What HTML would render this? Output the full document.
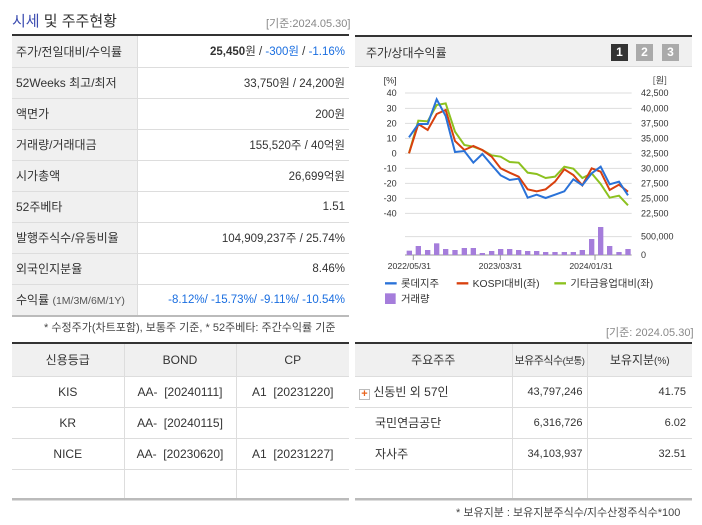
<!DOCTYPE html>
<html><head><meta charset="utf-8"><style>
*{margin:0;padding:0;box-sizing:border-box}
body{width:702px;height:525px;background:#fff;font-family:"Liberation Sans","Noto Sans CJK KR",sans-serif;color:#333;position:relative;overflow:hidden;font-size:12px}
.a{position:absolute;white-space:nowrap}
table{border-collapse:collapse;position:absolute;table-layout:fixed}
td{height:31px;border-bottom:1px solid #ddd;font-size:12px;white-space:nowrap;overflow:hidden}
.st td.l{background:#f0f0f0;padding-left:4px;border-right:1px solid #ddd;color:#333}
.st td.r{text-align:right;padding-right:4px;color:#333;font-size:11.5px}
.b td{border-right:1px solid #ddd;text-align:center;height:31px}
.b td:last-child{border-right:none}
.b tr.h td{background:#f0f0f0;height:32px}
.blue,.st td.blue{color:#1a6ee0}
</style></head><body>
<div class="a" style="left:12px;top:10px;font-size:15px;color:#333"><span style="color:#3a4bb0">시세</span> 및 주주현황</div>
<div class="a" style="left:266px;top:15px;font-size:11px;color:#888">[기준:2024.05.30]</div>
<div class="a" style="left:12px;top:34px;width:337px;height:2px;background:#333"></div>
<table class="st" style="left:12px;top:36px;width:337px">
<col style="width:125px"><col>
<tr><td class="l">주가/전일대비/수익률</td><td class="r"><b>25,450</b>원 / <span class="blue">-300원</span> / <span class="blue">-1.16%</span></td></tr>
<tr><td class="l">52Weeks 최고/최저</td><td class="r">33,750원 / 24,200원</td></tr>
<tr><td class="l">액면가</td><td class="r">200원</td></tr>
<tr><td class="l">거래량/거래대금</td><td class="r">155,520주 / 40억원</td></tr>
<tr><td class="l">시가총액</td><td class="r">26,699억원</td></tr>
<tr><td class="l">52주베타</td><td class="r">1.51</td></tr>
<tr><td class="l">발행주식수/유동비율</td><td class="r">104,909,237주 / 25.74%</td></tr>
<tr><td class="l">외국인지분율</td><td class="r">8.46%</td></tr>
<tr><td class="l" style="border-bottom:none">수익률 <span style="font-size:10.5px;color:#555">(1M/3M/6M/1Y)</span></td><td class="r blue" style="border-bottom:none">-8.12%/ -15.73%/ -9.11%/ -10.54%</td></tr>
</table>
<div class="a" style="left:12px;top:315px;width:337px;height:2px;background:#bbb"></div>

<div class="a" style="left:355px;top:35px;width:337px;height:2px;background:#333"></div>
<div class="a" style="left:355px;top:37px;width:337px;height:30px;background:#f0f0f0;border-bottom:1px solid #ddd"></div>
<div class="a" style="left:366px;top:44px;font-size:12px">주가/상대수익률</div>
<div class="a" style="left:611px;top:44px;width:17px;height:17px;background:#333;color:#fff;font-weight:bold;text-align:center;font-size:12px;line-height:17px">1</div>
<div class="a" style="left:636px;top:44px;width:17px;height:17px;background:#aaa;color:#fff;font-weight:bold;text-align:center;font-size:12px;line-height:17px">2</div>
<div class="a" style="left:662px;top:44px;width:17px;height:17px;background:#aaa;color:#fff;font-weight:bold;text-align:center;font-size:12px;line-height:17px">3</div>

<svg class="a" style="left:355px;top:30px" width="347" height="280" viewBox="0 0 1041 840">
<g stroke="#ddd" stroke-width="3">
<line x1="150" y1="189" x2="830" y2="189"/><line x1="150" y1="235" x2="830" y2="235"/><line x1="150" y1="280" x2="830" y2="280"/><line x1="150" y1="325" x2="830" y2="325"/><line x1="150" y1="370" x2="830" y2="370"/><line x1="150" y1="415" x2="830" y2="415"/><line x1="150" y1="460" x2="830" y2="460"/><line x1="150" y1="505" x2="830" y2="505"/><line x1="150" y1="550" x2="830" y2="550"/><line x1="150" y1="620" x2="830" y2="620"/>
</g>
<line x1="150" y1="675" x2="830" y2="675" stroke="#999" stroke-width="3"/>
<g stroke="#999" stroke-width="3"><line x1="175" y1="675" x2="175" y2="690"/><line x1="436" y1="675" x2="436" y2="690"/><line x1="720" y1="675" x2="720" y2="690"/></g>
<g fill="#a57ddb">
<rect x="155" y="662" width="16" height="13"/><rect x="182" y="648" width="16" height="27"/><rect x="210" y="660" width="16" height="15"/><rect x="237" y="640" width="16" height="35"/><rect x="264" y="657" width="16" height="18"/><rect x="292" y="660" width="16" height="15"/><rect x="320" y="654" width="16" height="21"/><rect x="347" y="654" width="16" height="21"/><rect x="374" y="669" width="16" height="6"/><rect x="402" y="663" width="16" height="12"/><rect x="429" y="657" width="16" height="18"/><rect x="456" y="657" width="16" height="18"/><rect x="483" y="660" width="16" height="15"/><rect x="510" y="663" width="16" height="12"/><rect x="537" y="663" width="16" height="12"/><rect x="564" y="666" width="16" height="9"/><rect x="592" y="666" width="16" height="9"/><rect x="620" y="666" width="16" height="9"/><rect x="647" y="666" width="16" height="9"/><rect x="674" y="660" width="16" height="15"/><rect x="702" y="627" width="16" height="48"/><rect x="729" y="591" width="16" height="84"/><rect x="756" y="648" width="16" height="27"/><rect x="784" y="666" width="16" height="9"/><rect x="811" y="657" width="16" height="18"/>
</g>
<polyline fill="none" stroke="#8cc11f" stroke-width="6" points="162,370 190,272 218,274 245,225 272,220 300,305 328,345 355,350 382,360 410,376 437,380 464,396 491,398 518,428 545,432 572,444 600,440 628,410 655,416 682,444 710,430 737,462 764,503 792,497 819,526"/>
<polyline fill="none" stroke="#d8400e" stroke-width="6" points="162,370 190,282 218,300 245,252 272,240 300,333 328,360 355,348 382,360 410,380 437,415 464,428 491,440 518,478 545,484 572,478 600,455 628,418 655,435 682,466 710,415 737,425 764,480 792,464 819,485"/>
<polyline fill="none" stroke="#2a72d8" stroke-width="6" points="162,322 190,282 218,282 245,208 272,258 300,366 328,363 355,398 382,372 410,405 437,436 464,450 491,446 518,503 545,494 572,504 600,494 628,484 655,448 682,466 710,430 737,410 764,463 792,455 819,496"/>
<g font-size="27" fill="#333" font-family="Liberation Sans, sans-serif" text-anchor="end">
<text x="125" y="160">[%]</text>
<text x="125" y="198">40</text><text x="125" y="244">30</text><text x="125" y="289">20</text><text x="125" y="334">10</text><text x="125" y="379">0</text><text x="125" y="424">-10</text><text x="125" y="469">-20</text><text x="125" y="514">-30</text><text x="125" y="559">-40</text>
</g>
<g font-size="27" fill="#333" font-family="Liberation Sans, sans-serif">
<text x="893" y="160" font-family="Noto Sans CJK KR">[원]</text>
<text x="858" y="198">42,500</text><text x="858" y="244">40,000</text><text x="858" y="289">37,500</text><text x="858" y="334">35,000</text><text x="858" y="379">32,500</text><text x="858" y="424">30,000</text><text x="858" y="469">27,500</text><text x="858" y="514">25,000</text><text x="858" y="559">22,500</text><text x="858" y="629">500,000</text><text x="858" y="684">0</text>
</g>
<g font-size="26" fill="#333" font-family="Liberation Sans, sans-serif" text-anchor="middle">
<text x="163" y="717">2022/05/31</text><text x="436" y="717">2023/03/31</text><text x="708" y="717">2024/01/31</text>
</g>
<g font-size="31" fill="#333" font-family="Liberation Sans, Noto Sans CJK KR, sans-serif">
<line x1="90" y1="760" x2="125" y2="760" stroke="#2a72d8" stroke-width="7"/><text x="138" y="771">롯데지주</text>
<line x1="305" y1="760" x2="340" y2="760" stroke="#d8400e" stroke-width="7"/><text x="353" y="771">KOSPI대비(좌)</text>
<line x1="598" y1="760" x2="633" y2="760" stroke="#8cc11f" stroke-width="7"/><text x="646" y="771">기타금융업대비(좌)</text>
<rect x="90" y="790" width="32" height="32" fill="#a57ddb"/><text x="138" y="817">거래량</text>
</g>
</svg>

<div class="a" style="left:44px;top:319px;font-size:11px;color:#444">* 수정주가(차트포함), 보통주 기준, * 52주베타: 주간수익률 기준</div>
<div class="a" style="left:606px;top:324px;font-size:11px;color:#888">[기준: 2024.05.30]</div>

<div class="a" style="left:12px;top:342px;width:337px;height:2px;background:#333"></div>
<table class="b" style="left:12px;top:344px;width:337px">
<col style="width:112px"><col style="width:112px"><col>
<tr class="h"><td>신용등급</td><td>BOND</td><td>CP</td></tr>
<tr><td>KIS</td><td>AA-&nbsp; [20240111]</td><td>A1&nbsp; [20231220]</td></tr>
<tr><td>KR</td><td>AA-&nbsp; [20240115]</td><td></td></tr>
<tr><td>NICE</td><td>AA-&nbsp; [20230620]</td><td>A1&nbsp; [20231227]</td></tr>
<tr><td></td><td></td><td></td></tr>
</table>
<div class="a" style="left:12px;top:498px;width:337px;height:2px;background:#bbb"></div>

<div class="a" style="left:355px;top:342px;width:337px;height:2px;background:#333"></div>
<table class="b" style="left:355px;top:344px;width:337px">
<col style="width:157px"><col style="width:75px"><col>
<tr class="h"><td>주요주주</td><td style="font-size:11px;letter-spacing:-0.5px">보유주식수<span style="font-size:9.5px">(보통)</span></td><td>보유지분<span style="font-size:10px">(%)</span></td></tr>
<tr><td style="text-align:left;padding-left:4px"><span style="display:inline-block;width:11px;height:11px;border:1px solid #bbb;color:#e8641e;font-size:11px;line-height:9px;text-align:center;font-weight:bold;vertical-align:-1px">+</span> 신동빈 외 57인</td><td style="text-align:right;padding-right:4px;font-size:11px">43,797,246</td><td style="text-align:right;padding-right:6px;font-size:11px">41.75</td></tr>
<tr><td style="text-align:left;padding-left:20px">국민연금공단</td><td style="text-align:right;padding-right:4px;font-size:11px">6,316,726</td><td style="text-align:right;padding-right:6px;font-size:11px">6.02</td></tr>
<tr><td style="text-align:left;padding-left:20px">자사주</td><td style="text-align:right;padding-right:4px;font-size:11px">34,103,937</td><td style="text-align:right;padding-right:6px;font-size:11px">32.51</td></tr>
<tr><td></td><td></td><td></td></tr>
</table>
<div class="a" style="left:355px;top:498px;width:337px;height:2px;background:#bbb"></div>
<div class="a" style="left:456px;top:504px;font-size:11px;color:#444">* 보유지분 : 보유지분주식수/지수산정주식수*100</div>
</body></html>
